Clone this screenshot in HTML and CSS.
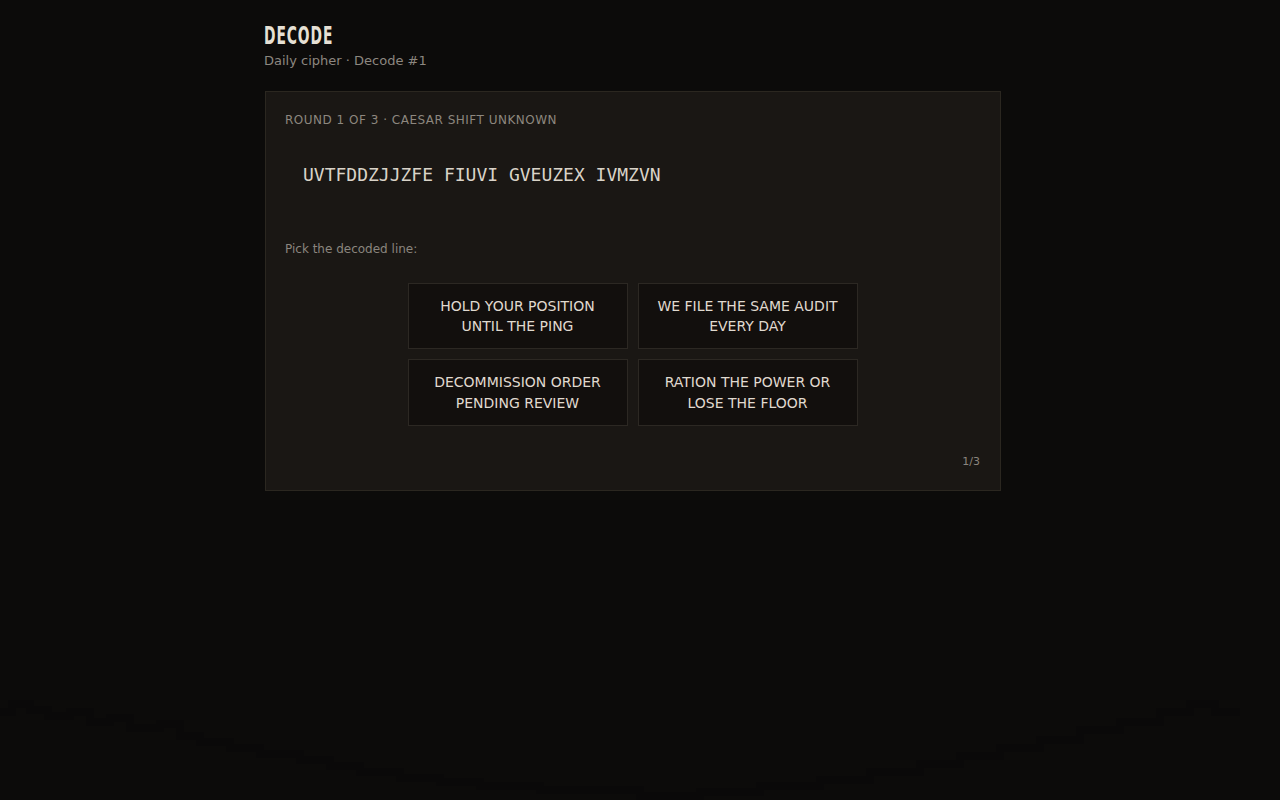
FILE: index.html
```html
<!DOCTYPE html>
<html lang="en">
<head>
<meta charset="utf-8">
<title>Decode</title>
<link rel="stylesheet" href="styles.css">
</head>
<body>
<svg class="skyline" width="1280" height="120" viewBox="0 680 1280 120" aria-hidden="true">
  <path d="M0,712 L12,712 L12,704 L30,704 L30,710 L48,710 L48,716 L70,716 L70,712 L90,712 L90,722 L110,722 L110,718 L130,718 L130,728 L160,728 L160,724 L180,724 L180,736 L200,736 L200,742 L230,742 L230,748 L260,748 L260,754 L300,754 L300,760 L330,760 L330,766 L360,766 L360,772 L400,772 L400,778 L440,778 L440,782 L480,782 L480,786 L540,786 L540,790 L640,790 L640,796 L700,796 L700,792 L760,792 L760,786 L820,786 L820,780 L870,780 L870,772 L920,772 L920,764 L960,764 L960,756 L1000,756 L1000,748 L1040,748 L1040,740 L1080,740 L1080,730 L1120,730 L1120,722 L1160,722 L1160,712 L1190,712 L1190,704 L1215,704 L1215,712 L1240,712"/>
</svg>
<main class="wrap">
  <header class="head">
    <h1 class="title">DECODE</h1>
    <p class="sub">Daily cipher · Decode #1</p>
  </header>
  <section class="card">
    <div class="round">ROUND 1 OF 3 · CAESAR SHIFT UNKNOWN</div>
    <div class="cipher">UVTFDDZJJZFE FIUVI GVEUZEX IVMZVN</div>
    <div class="pick">Pick the decoded line:</div>
    <div class="choices">
      <button class="choice">HOLD YOUR POSITION UNTIL THE PING</button>
      <button class="choice">WE FILE THE SAME AUDIT EVERY DAY</button>
      <button class="choice choice-tall">DECOMMISSION ORDER PENDING REVIEW</button>
      <button class="choice choice-tall">RATION THE POWER OR LOSE THE FLOOR</button>
    </div>
    <div class="count">1/3</div>
  </section>
</main>
</body>
</html>
```

FILE: styles.css
```css
html, body {
  margin: 0;
  padding: 0;
  background: #0c0b0a;
  height: 100%;
}
body {
  font-family: "DejaVu Sans", "Noto Sans", sans-serif;
  color: #d9d3c8;
  overflow: hidden;
}
.skyline {
  position: fixed;
  left: 0;
  bottom: 0;
  z-index: 0;
}
.skyline path {
  fill: none;
  stroke: #0a0909;
  stroke-width: 8;
}
.wrap {
  position: relative;
  z-index: 1;
  width: 750px;
  box-sizing: border-box;
  padding-right: 14px;
  margin: 0 auto;
  padding-top: 22px;
}
.head {
  margin: 0 0 21px -1px;
}
.title {
  margin: 0;
  font-family: "DejaVu Sans Condensed", "DejaVu Sans", sans-serif;
  font-weight: bold;
  font-size: 25px;
  line-height: 28px;
  letter-spacing: 1.5px;
  color: #e6e0d4;
  display: inline-block;
  transform: scaleX(0.615);
  transform-origin: left center;
}
.sub {
  margin: 2px 0 0 0;
  font-size: 13px;
  line-height: 18px;
  color: #8c8780;
}
.card {
  background: #1a1714;
  border: 1px solid #2b2720;
  padding: 20px 20px 21px 19px;
}
.round {
  font-size: 12px;
  line-height: 16px;
  letter-spacing: 0.5px;
  color: #8d877f;
}
.cipher {
  margin-top: 17px;
  padding: 18px 18px;
  font-family: "DejaVu Sans Mono", "Liberation Mono", monospace;
  font-size: 18px;
  line-height: 24px;
  color: #d9d3c8;
}
.pick {
  margin-top: 36px;
  font-size: 12px;
  line-height: 16px;
  color: #8a857e;
}
.choices {
  margin-top: 26px;
  display: grid;
  grid-template-columns: 220px 220px;
  gap: 10px;
  justify-content: center;
}
.choice {
  background: #120f0d;
  border: 1px solid #2c2823;
  padding: 12px 16px;
  font-family: "DejaVu Sans", sans-serif;
  font-size: 14px;
  line-height: 20px;
  color: #e0dad0;
  text-align: center;
  cursor: pointer;
}
.choice-tall {
  line-height: 21px;
  padding: 11.5px 16px;
}
.count {
  margin-top: 29px;
  text-align: right;
  font-size: 11px;
  line-height: 14px;
  color: #8a857e;
}
```
